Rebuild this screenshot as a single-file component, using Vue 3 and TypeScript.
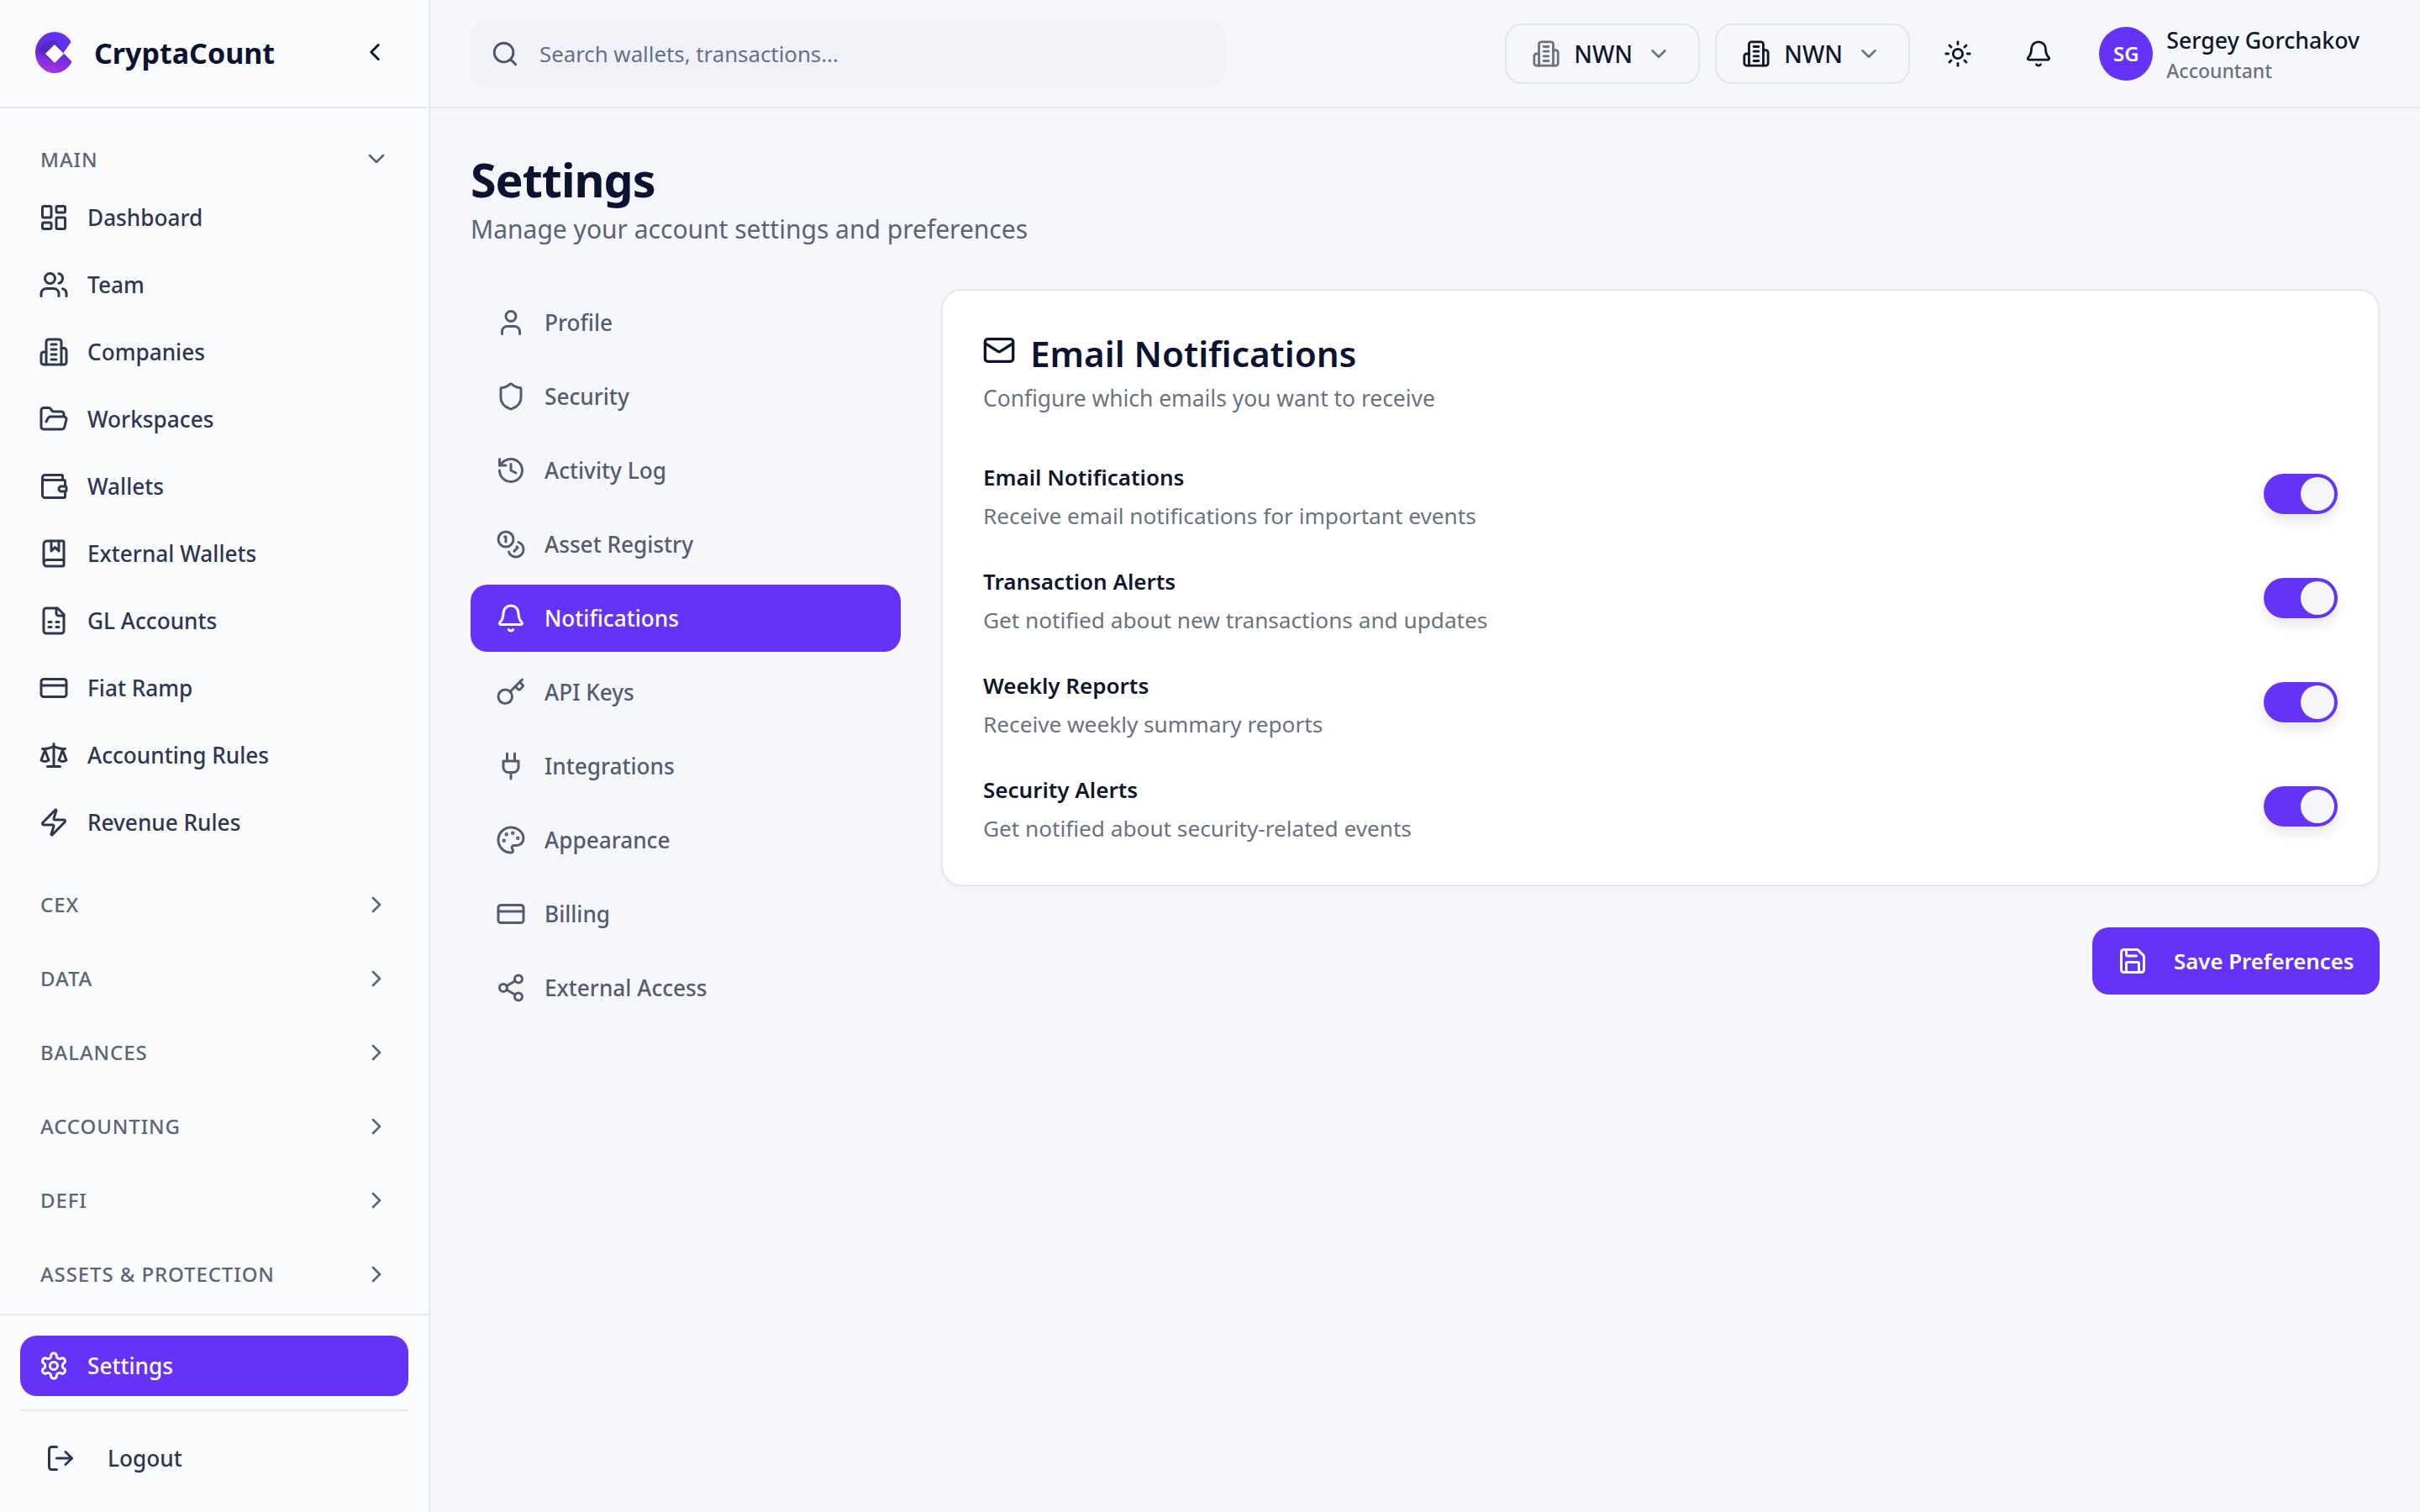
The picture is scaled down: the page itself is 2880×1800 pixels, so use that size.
<script setup lang="ts">
import { ref } from 'vue'

const icons: Record<string, string> = {
  dashboard: '<rect x="3" y="3" width="7" height="9" rx="1"/><rect x="14" y="3" width="7" height="5" rx="1"/><rect x="14" y="12" width="7" height="9" rx="1"/><rect x="3" y="16" width="7" height="5" rx="1"/>',
  team: '<path d="M16 21v-2a4 4 0 0 0-4-4H6a4 4 0 0 0-4 4v2"/><circle cx="9" cy="7" r="4"/><path d="M22 21v-2a4 4 0 0 0-3-3.87"/><path d="M16 3.13a4 4 0 0 1 0 7.75"/>',
  building: '<path d="M6 22V4a2 2 0 0 1 2-2h8a2 2 0 0 1 2 2v18Z"/><path d="M6 12H4a2 2 0 0 0-2 2v6a2 2 0 0 0 2 2h2"/><path d="M18 9h2a2 2 0 0 1 2 2v9a2 2 0 0 1-2 2h-2"/><path d="M10 6h4"/><path d="M10 10h4"/><path d="M10 14h4"/><path d="M10 18h4"/>',
  folder: '<path d="m6 14 1.5-2.9A2 2 0 0 1 9.24 10H20a2 2 0 0 1 1.94 2.5l-1.54 6a2 2 0 0 1-1.95 1.5H4a2 2 0 0 1-2-2V5a2 2 0 0 1 2-2h3.9a2 2 0 0 1 1.69.9l.81 1.2a2 2 0 0 0 1.67.9H18a2 2 0 0 1 2 2v2"/>',
  wallet: '<path d="M19 7V4a1 1 0 0 0-1-1H5a2 2 0 0 0 0 4h15a1 1 0 0 1 1 1v4h-3a2 2 0 0 0 0 4h3a1 1 0 0 0 1-1v-2a1 1 0 0 0-1-1"/><path d="M3 5v14a2 2 0 0 0 2 2h15a1 1 0 0 0 1-1v-4"/>',
  book: '<path d="M10 2v8l3-3 3 3V2"/><path d="M4 19.5v-15A2.5 2.5 0 0 1 6.5 2H19a1 1 0 0 1 1 1v18a1 1 0 0 1-1 1H6.5a1 1 0 0 1 0-5H20"/>',
  sheet: '<path d="M15 2H6a2 2 0 0 0-2 2v16a2 2 0 0 0 2 2h12a2 2 0 0 0 2-2V7Z"/><path d="M14 2v4a2 2 0 0 0 2 2h4"/><path d="M8 13h2"/><path d="M14 13h2"/><path d="M8 17h2"/><path d="M14 17h2"/>',
  card: '<rect x="2" y="5" width="20" height="14" rx="2"/><line x1="2" y1="10" x2="22" y2="10"/>',
  scale: '<path d="m16 16 3-8 3 8c-.87.65-1.92 1-3 1s-2.13-.35-3-1Z"/><path d="m2 16 3-8 3 8c-.87.65-1.92 1-3 1s-2.13-.35-3-1Z"/><path d="M7 21h10"/><path d="M12 3v18"/><path d="M3 7h2c2 0 5-1 7-2 2 1 5 2 7 2h2"/>',
  zap: '<path d="M4 14a1 1 0 0 1-.78-1.63l9.9-10.2a.5.5 0 0 1 .86.46l-1.92 6.02A1 1 0 0 0 13 10h7a1 1 0 0 1 .78 1.63l-9.9 10.2a.5.5 0 0 1-.86-.46l1.92-6.02A1 1 0 0 0 11 14z"/>',
  gear: '<path d="M12.22 2h-.44a2 2 0 0 0-2 2v.18a2 2 0 0 1-1 1.73l-.43.25a2 2 0 0 1-2 0l-.15-.08a2 2 0 0 0-2.73.73l-.22.38a2 2 0 0 0 .73 2.73l.15.1a2 2 0 0 1 1 1.72v.51a2 2 0 0 1-1 1.74l-.15.09a2 2 0 0 0-.73 2.73l.22.38a2 2 0 0 0 2.73.73l.15-.08a2 2 0 0 1 2 0l.43.25a2 2 0 0 1 1 1.73V20a2 2 0 0 0 2 2h.44a2 2 0 0 0 2-2v-.18a2 2 0 0 1 1-1.73l.43-.25a2 2 0 0 1 2 0l.15.08a2 2 0 0 0 2.73-.73l.22-.39a2 2 0 0 0-.73-2.73l-.15-.08a2 2 0 0 1-1-1.74v-.5a2 2 0 0 1 1-1.74l.15-.09a2 2 0 0 0 .73-2.73l-.22-.38a2 2 0 0 0-2.73-.73l-.15.08a2 2 0 0 1-2 0l-.43-.25a2 2 0 0 1-1-1.73V4a2 2 0 0 0-2-2z"/><circle cx="12" cy="12" r="3"/>',
  logout: '<path d="M9 21H5a2 2 0 0 1-2-2V5a2 2 0 0 1 2-2h4"/><path d="m16 17 5-5-5-5"/><path d="M21 12H9"/>',
  user: '<path d="M19 21v-2a4 4 0 0 0-4-4H9a4 4 0 0 0-4 4v2"/><circle cx="12" cy="7" r="4"/>',
  shield: '<path d="M20 13c0 5-3.5 7.5-7.66 8.95a1 1 0 0 1-.67-.01C7.5 20.5 4 18 4 13V6a1 1 0 0 1 1-1c2 0 4.5-1.2 6.24-2.72a1.17 1.17 0 0 1 1.52 0C14.51 3.81 17 5 19 5a1 1 0 0 1 1 1z"/>',
  history: '<path d="M3 12a9 9 0 1 0 9-9 9.75 9.75 0 0 0-6.74 2.74L3 8"/><path d="M3 3v5h5"/><path d="M12 7v5l4 2"/>',
  coins: '<circle cx="8" cy="8" r="6"/><path d="M18.09 10.37A6 6 0 1 1 10.34 18"/><path d="M7 6h1v4"/><path d="m16.71 13.88.7.71-2.82 2.82"/>',
  bell: '<path d="M10.268 21a2 2 0 0 0 3.464 0"/><path d="M3.262 15.326A1 1 0 0 0 4 17h16a1 1 0 0 0 .74-1.673C19.41 13.956 18 12.499 18 8A6 6 0 0 0 6 8c0 4.499-1.411 5.956-2.738 7.326"/>',
  key: '<path d="m15.5 7.5 2.3 2.3a1 1 0 0 0 1.4 0l2.1-2.1a1 1 0 0 0 0-1.4L19 4"/><path d="m21 2-9.6 9.6"/><circle cx="7.5" cy="15.5" r="5.5"/>',
  plug: '<path d="M12 22v-5"/><path d="M9 8V2"/><path d="M15 8V2"/><path d="M18 8v5a4 4 0 0 1-4 4h-4a4 4 0 0 1-4-4V8Z"/>',
  palette: '<circle cx="13.5" cy="6.5" r=".5" fill="currentColor"/><circle cx="17.5" cy="10.5" r=".5" fill="currentColor"/><circle cx="8.5" cy="7.5" r=".5" fill="currentColor"/><circle cx="6.5" cy="12.5" r=".5" fill="currentColor"/><path d="M12 2C6.5 2 2 6.5 2 12s4.5 10 10 10c.926 0 1.648-.746 1.648-1.688 0-.437-.18-.835-.437-1.125-.29-.289-.438-.652-.438-1.125a1.64 1.64 0 0 1 1.668-1.668h1.996c3.051 0 5.555-2.503 5.555-5.554C21.965 6.012 17.461 2 12 2z"/>',
  share: '<circle cx="18" cy="5" r="3"/><circle cx="6" cy="12" r="3"/><circle cx="18" cy="19" r="3"/><line x1="8.59" y1="13.51" x2="15.42" y2="17.49"/><line x1="15.41" y1="6.51" x2="8.59" y2="10.49"/>',
  mail: '<rect x="2" y="4" width="20" height="16" rx="2"/><path d="m22 7-8.97 5.7a1.94 1.94 0 0 1-2.06 0L2 7"/>',
  save: '<path d="M15.2 3a2 2 0 0 1 1.4.6l3.8 3.8a2 2 0 0 1 .6 1.4V19a2 2 0 0 1-2 2H5a2 2 0 0 1-2-2V5a2 2 0 0 1 2-2z"/><path d="M17 21v-7a1 1 0 0 0-1-1H8a1 1 0 0 0-1 1v7"/><path d="M7 3v4a1 1 0 0 0 1 1h7"/>',
  sun: '<circle cx="12" cy="12" r="4"/><path d="M12 2v2"/><path d="M12 20v2"/><path d="m4.93 4.93 1.41 1.41"/><path d="m17.66 17.66 1.41 1.41"/><path d="M2 12h2"/><path d="M20 12h2"/><path d="m6.34 17.66-1.41 1.41"/><path d="m19.07 4.93-1.41 1.41"/>',
  search: '<circle cx="11" cy="11" r="8"/><path d="m21 21-4.3-4.3"/>',
  down: '<path d="m6 9 6 6 6-6"/>',
  right: '<path d="m9 18 6-6-6-6"/>',
  left: '<path d="m15 18-6-6 6-6"/>',
}

const mainItems = [
  { label: 'Dashboard', icon: 'dashboard' },
  { label: 'Team', icon: 'team' },
  { label: 'Companies', icon: 'building' },
  { label: 'Workspaces', icon: 'folder' },
  { label: 'Wallets', icon: 'wallet' },
  { label: 'External Wallets', icon: 'book' },
  { label: 'GL Accounts', icon: 'sheet' },
  { label: 'Fiat Ramp', icon: 'card' },
  { label: 'Accounting Rules', icon: 'scale' },
  { label: 'Revenue Rules', icon: 'zap' },
]

const sections = ['CEX', 'DATA', 'BALANCES', 'ACCOUNTING', 'DEFI', 'ASSETS & PROTECTION']

const settingsNav = [
  { label: 'Profile', icon: 'user' },
  { label: 'Security', icon: 'shield' },
  { label: 'Activity Log', icon: 'history' },
  { label: 'Asset Registry', icon: 'coins' },
  { label: 'Notifications', icon: 'bell' },
  { label: 'API Keys', icon: 'key' },
  { label: 'Integrations', icon: 'plug' },
  { label: 'Appearance', icon: 'palette' },
  { label: 'Billing', icon: 'card' },
  { label: 'External Access', icon: 'share' },
]

const prefs = ref([
  { title: 'Email Notifications', desc: 'Receive email notifications for important events', on: true },
  { title: 'Transaction Alerts', desc: 'Get notified about new transactions and updates', on: true },
  { title: 'Weekly Reports', desc: 'Receive weekly summary reports', on: true },
  { title: 'Security Alerts', desc: 'Get notified about security-related events', on: true },
])
</script>

<template>
  <div class="app">
    <aside class="sidebar">
      <div class="brand">
        <svg class="logo" viewBox="0 0 46 49">
          <defs>
            <linearGradient id="logo-a" x1="0.7" y1="0" x2="0.45" y2="1">
              <stop offset="0" stop-color="#5f35fb" />
              <stop offset="0.55" stop-color="#6a2bd8" />
              <stop offset="1" stop-color="#a832ea" />
            </linearGradient>
          </defs>
          <ellipse cx="23" cy="24.5" rx="23" ry="24.5" fill="url(#logo-a)" />
          <path d="M4 27C4 15 13 9 23 10l11 16-11 12C14 30 8 26 4 27Z" fill="#4f22b4" opacity="0.55" />
          <path d="M46 7 33.5 25 46 38Z" fill="#f9fbfd" />
          <path d="M23 15 34 26 23 37 12 26Z" fill="#fff" />
        </svg>
        <span class="brand-name">CryptaCount</span>
        <svg class="icon collapse" viewBox="0 0 24 24" v-html="icons.left" />
      </div>

      <nav class="side-nav">
        <div class="section">
          <div class="section-head">
            <span>MAIN</span>
            <svg class="icon chev" viewBox="0 0 24 24" v-html="icons.down" />
          </div>
          <div class="section-items">
            <a v-for="item in mainItems" :key="item.label" class="side-item">
              <svg class="icon" viewBox="0 0 24 24" v-html="icons[item.icon]" />
              <span>{{ item.label }}</span>
            </a>
          </div>
        </div>
        <div v-for="name in sections" :key="name" class="section">
          <div class="section-head">
            <span>{{ name }}</span>
            <svg class="icon chev" viewBox="0 0 24 24" v-html="icons.right" />
          </div>
        </div>
      </nav>

      <div class="side-footer">
        <a class="side-item active">
          <svg class="icon" viewBox="0 0 24 24" v-html="icons.gear" />
          <span>Settings</span>
        </a>
        <div class="footer-line"></div>
        <a class="logout">
          <svg class="icon" viewBox="0 0 24 24" v-html="icons.logout" />
          <span>Logout</span>
        </a>
      </div>
    </aside>

    <div class="main">
      <header class="topbar">
        <div class="search">
          <svg class="icon" viewBox="0 0 24 24" v-html="icons.search" />
          <span>Search wallets, transactions...</span>
        </div>
        <div class="top-right">
          <button class="selector">
            <svg class="icon muted" viewBox="0 0 24 24" v-html="icons.building" />
            <span>NWN</span>
            <svg class="icon chev" viewBox="0 0 24 24" v-html="icons.down" />
          </button>
          <button class="selector">
            <svg class="icon" viewBox="0 0 24 24" v-html="icons.building" />
            <span>NWN</span>
            <svg class="icon chev" viewBox="0 0 24 24" v-html="icons.down" />
          </button>
          <svg class="icon top-icon sun" viewBox="0 0 24 24" v-html="icons.sun" />
          <svg class="icon top-icon bell" viewBox="0 0 24 24" v-html="icons.bell" />
          <div class="user">
            <div class="avatar">SG</div>
            <div class="user-text">
              <div class="user-name">Sergey Gorchakov</div>
              <div class="user-role">Accountant</div>
            </div>
          </div>
        </div>
      </header>

      <main class="content">
        <h1 class="page-title">Settings</h1>
        <p class="page-sub">Manage your account settings and preferences</p>

        <div class="columns">
          <nav class="settings-nav">
            <a
              v-for="item in settingsNav"
              :key="item.label"
              class="settings-item"
              :class="{ active: item.label === 'Notifications' }"
            >
              <svg class="icon" viewBox="0 0 24 24" v-html="icons[item.icon]" />
              <span>{{ item.label }}</span>
            </a>
          </nav>

          <div class="panel">
            <section class="card">
              <div class="card-title">
                <svg class="icon" viewBox="0 0 24 24" v-html="icons.mail" />
                <h2>Email Notifications</h2>
              </div>
              <p class="card-sub">Configure which emails you want to receive</p>
              <div class="rows">
                <div v-for="p in prefs" :key="p.title" class="row">
                  <div>
                    <div class="row-title">{{ p.title }}</div>
                    <div class="row-desc">{{ p.desc }}</div>
                  </div>
                  <button class="toggle" :class="{ on: p.on }" @click="p.on = !p.on">
                    <span class="knob"></span>
                  </button>
                </div>
              </div>
            </section>
            <div class="actions">
              <button class="save">
                <svg class="icon" viewBox="0 0 24 24" v-html="icons.save" />
                <span>Save Preferences</span>
              </button>
            </div>
          </div>
        </div>
      </main>
    </div>
  </div>
</template>

<style>
html,
body {
  margin: 0;
  background: #f6f7fb;
}
</style>

<style scoped>
.app {
  display: flex;
  height: 1800px;
  overflow: hidden;
  font-family: "Noto Sans", "Liberation Sans", sans-serif;
  color: #0f172a;
}

.icon {
  width: 36px;
  height: 36px;
  flex-shrink: 0;
  fill: none;
  stroke: currentColor;
  stroke-width: 2;
  stroke-linecap: round;
  stroke-linejoin: round;
}

.sidebar {
  width: 512px;
  flex-shrink: 0;
  box-sizing: border-box;
  display: flex;
  flex-direction: column;
  background: #f9fbfd;
  border-right: 2px solid #e4e7ec;
}

.brand {
  height: 129px;
  box-sizing: border-box;
  flex-shrink: 0;
  display: flex;
  align-items: center;
  padding: 0 42px 2px;
  border-bottom: 2px solid #e4e7ec;
}

.logo {
  width: 46px;
  height: 49px;
  flex-shrink: 0;
}

.brand-name {
  margin-left: 24px;
  font-size: 34px;
  font-weight: 700;
  color: #0c1330;
}

.collapse {
  width: 34px;
  height: 34px;
  margin-left: auto;
  margin-right: 5px;
  margin-top: -2px;
  color: #0c1330;
}

.side-nav {
  flex: 1;
  min-height: 0;
  overflow: hidden;
  padding-top: 32px;
  box-sizing: border-box;
}

.section + .section {
  margin-top: 32px;
}

.section-head {
  height: 56px;
  display: flex;
  align-items: center;
  justify-content: space-between;
  padding: 0 46px 0 48px;
  font-size: 24px;
  font-weight: 500;
  letter-spacing: 0.9px;
  color: #5d6576;
}

.section + .section .section-head span {
  margin-top: -2px;
}

.chev {
  width: 32px;
  height: 32px;
  color: #5d6576;
}

.section-items {
  margin: 2px 0 -2px;
}

.side-item {
  height: 80px;
  display: flex;
  align-items: center;
  gap: 22px;
  padding: 0 46px;
  font-size: 26.2px;
  font-weight: 500;
  color: #2e3651;
}

.side-footer {
  flex-shrink: 0;
  height: 236px;
  box-sizing: border-box;
  border-top: 2px solid #e4e7ec;
  padding: 24px 24px;
}

.side-footer .side-item {
  height: 72px;
  padding: 0 22px;
  border-radius: 20px;
}

.side-item.active {
  background: #6532f8;
  color: #fff;
}

.footer-line {
  height: 2px;
  margin: 16px 0;
  background: #e4e7ec;
}

.logout {
  height: 80px;
  display: flex;
  align-items: center;
  gap: 38px;
  padding: 0 30px;
  font-size: 26.2px;
  font-weight: 500;
  color: #2e3651;
}

.main {
  flex: 1;
  min-width: 0;
  display: flex;
  flex-direction: column;
  background: #f6f7fb;
}

.topbar {
  height: 129px;
  box-sizing: border-box;
  flex-shrink: 0;
  display: flex;
  align-items: center;
  justify-content: space-between;
  padding: 0 72px 0 48px;
  border-bottom: 2px solid #e4e7ec;
}

.search {
  width: 898px;
  height: 80px;
  box-sizing: border-box;
  display: flex;
  align-items: center;
  gap: 24px;
  padding: 0 24px;
  border-radius: 20px;
  background: #f1f2f7;
  font-size: 25.8px;
  color: #64708a;
}

.search .icon {
  color: #4b5468;
  width: 34px;
  height: 34px;
}

.top-right {
  display: flex;
  align-items: center;
}

.selector {
  width: 232px;
  height: 72px;
  box-sizing: border-box;
  display: flex;
  align-items: center;
  gap: 16px;
  margin-right: 18px;
  padding: 0 28px 0 30px;
  border: 2px solid #e2e5ec;
  border-radius: 20px;
  background: transparent;
  font-family: inherit;
  font-size: 28px;
  font-weight: 500;
  color: #0f172a;
}

.selector .icon {
  width: 34px;
  height: 34px;
}

.selector .muted {
  color: #6b7280;
}

.selector .chev {
  width: 30px;
  height: 30px;
  margin-left: 0;
  color: #6b7280;
}

.top-icon {
  color: #0f172a;
  width: 34px;
  height: 34px;
}

.sun {
  margin-left: 22px;
}

.bell {
  margin-left: 62px;
}

.user {
  display: flex;
  align-items: center;
  gap: 16px;
  margin-left: 55px;
}

.avatar {
  width: 64px;
  height: 64px;
  border-radius: 50%;
  background: #6532f8;
  display: flex;
  align-items: center;
  justify-content: center;
  font-size: 24px;
  font-weight: 600;
  color: #fff;
}

.user-text {
  padding-top: 3px;
}

.user-name {
  font-size: 26.7px;
  line-height: 36px;
  font-weight: 500;
  color: #0f172a;
}

.user-role {
  margin-top: 2px;
  font-size: 23px;
  line-height: 32px;
  font-weight: 500;
  color: #6b7280;
}

.content {
  padding: 52px 48px 0;
}

.page-title {
  margin: 0;
  font-size: 55.5px;
  line-height: 66px;
  font-weight: 700;
  letter-spacing: -1px;
  color: #0c1330;
}

.page-sub {
  margin: 6px 0 0;
  font-size: 30px;
  line-height: 40px;
  color: #5a6376;
}

.columns {
  display: flex;
  gap: 48px;
  margin-top: 51px;
}

.settings-nav {
  width: 512px;
  flex-shrink: 0;
  display: flex;
  flex-direction: column;
  gap: 8px;
}

.settings-item {
  height: 80px;
  display: flex;
  align-items: center;
  gap: 22px;
  padding: 0 30px;
  border-radius: 20px;
  font-size: 26.2px;
  font-weight: 500;
  color: #545c70;
}

.settings-item.active {
  background: #6532f8;
  color: #fff;
}

.panel {
  flex: 1;
  min-width: 0;
}

.card {
  box-sizing: border-box;
  height: 711px;
  padding: 46px 48px 0;
  background: #fff;
  border: 2px solid #e6e8ee;
  border-radius: 24px;
  box-shadow: 0 2px 4px rgba(15, 23, 42, 0.04);
}

.card-title {
  display: flex;
  align-items: center;
  gap: 17px;
  height: 56px;
}

.card-title .icon {
  width: 40px;
  height: 40px;
  margin-left: -1px;
  margin-top: -6px;
  color: #0c1330;
}

.card-title h2 {
  margin: 0;
  font-size: 42.2px;
  font-weight: 600;
  color: #0c1330;
}

.card-sub {
  margin: 8px 0 0;
  font-size: 26.4px;
  line-height: 36px;
  color: #6b7280;
}

.rows {
  margin-top: 56px;
  display: flex;
  flex-direction: column;
  gap: 38px;
}

.row {
  display: flex;
  justify-content: space-between;
}

.row-title {
  font-size: 26px;
  line-height: 40px;
  font-weight: 600;
  color: #0f172a;
}

.row-desc {
  margin-top: 6px;
  font-size: 26.2px;
  line-height: 40px;
  color: #6b7280;
}

.toggle {
  width: 88px;
  height: 48px;
  margin-top: 16px;
  padding: 0 4px;
  border: none;
  border-radius: 24px;
  background: #d1d5db;
  display: flex;
  align-items: center;
  box-shadow: 0 8px 14px rgba(15, 23, 42, 0.1);
}

.toggle.on {
  background: #6532f8;
  justify-content: flex-end;
}

.knob {
  width: 40px;
  height: 40px;
  border-radius: 50%;
  background: #f5f6fb;
}

.actions {
  display: flex;
  justify-content: flex-end;
  margin-top: 49px;
}

.save {
  width: 342px;
  height: 80px;
  display: flex;
  align-items: center;
  gap: 31px;
  padding: 0 30px;
  border: none;
  border-radius: 20px;
  background: #6532f8;
  font-family: inherit;
  font-size: 25.8px;
  font-weight: 600;
  color: #fff;
  white-space: nowrap;
}
</style>
